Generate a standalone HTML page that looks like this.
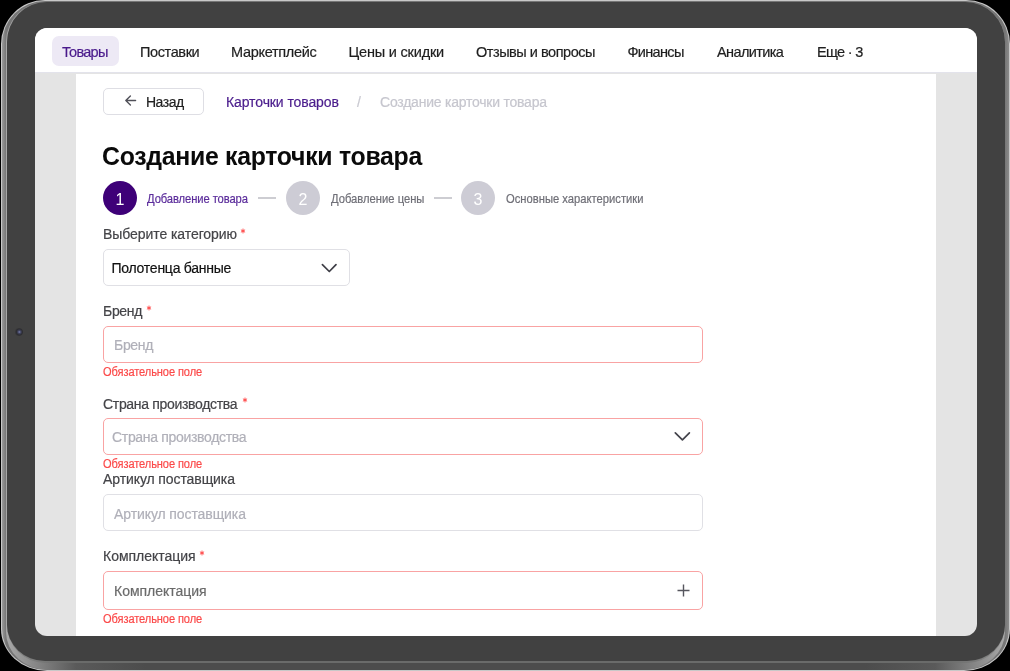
<!DOCTYPE html>
<html><head><meta charset="utf-8">
<style>
*{margin:0;padding:0;box-sizing:border-box}
html,body{width:1010px;height:671px;overflow:hidden;background:#000}
body{position:relative;font-family:"Liberation Sans",sans-serif}
.t,.ni{-webkit-text-stroke:0.2px currentColor}
#title{-webkit-text-stroke:0}
#wrap{position:absolute;left:0;top:0;width:1010px;height:671px;will-change:transform}
.abs{position:absolute}
#tA{left:1px;top:0;width:1009px;height:671px;border-radius:44px 44px 46px 46px/44px 44px 42px 42px;background:#c8c8c8}
#tB{left:2px;top:1px;width:1007px;height:669px;border-radius:43px 43px 45px 45px/43px 43px 41px 41px;background:linear-gradient(90deg,#9a9a9a,#767676 4px,#767676 calc(100% - 4px),#8a8a8a)}
#tC{left:6px;top:2px;width:999px;height:668px;border-radius:40px 40px 42px 42px/40px 40px 38px 38px;background:linear-gradient(90deg,#a8a8a8 0,#8c8c8c 25px,#5a5a5a 70px,#4c4c4c 140px,#4c4c4c calc(100% - 140px),#5a5a5a calc(100% - 70px),#8c8c8c calc(100% - 25px),#a8a8a8 100%)}
#tD{left:7px;top:2px;width:998px;height:661px;border-radius:40px 40px 38px 38px;background:linear-gradient(90deg,#8a8a8a 0,#6a6b6a 60px,#6a6b6a calc(100% - 60px),#8a8a8a 100%)}
#tE{left:7px;top:2px;width:998px;height:658.5px;border-radius:40px 40px 38px 38px/40px 40px 36px 36px;background:#414141}
#cam{left:14.5px;top:328px;width:8px;height:8px;border-radius:50%;background:radial-gradient(circle at 55% 50%,#7a80b0 0,#40435e 1.5px,#2c2c30 3px,#363638 4px)}
#screen{left:35px;top:28px;width:942px;height:608px;border-radius:12px;background:#e4e4e4;overflow:hidden}
#nav{left:0;top:0;width:942px;height:45px;background:#fff;border-bottom:1px solid #e3e3eb}
#content{left:41px;top:46px;width:860px;height:570px;background:#fff}
.ni{position:absolute;top:0;height:45px;line-height:48px;font-size:14.5px;color:#1f1f1f;white-space:nowrap}
#pill{left:17px;top:8px;width:67px;height:30px;border-radius:7px;background:#ede9f5}
.t{position:absolute;white-space:nowrap}
.circ{width:34px;height:34px;border-radius:50%;color:#fff;font-size:16px;line-height:38px;text-align:center}
.lbl{font-size:14px;color:#444448;line-height:16px}
.ast{color:#f04a4a;margin-left:4px;font-size:12px;position:relative;top:-3px}
.box{border:1px solid #e0e0e5;border-radius:5px;background:#fff}
.err{border-color:#f9a3a3}
.ph{font-size:14px;color:#b0b0b9}
.er{font-size:12.3px;letter-spacing:-0.1px;color:#fb4a4a;transform-origin:0 0;transform:scaleX(0.9)}
.t{line-height:16px}
.st{font-size:12.2px;transform-origin:0 0;transform:scaleX(0.92)}
</style></head><body><div id="wrap">
<div id="tA" class="abs"></div>
<div id="tB" class="abs"></div>
<div id="tC" class="abs"></div>
<div id="tD" class="abs"></div>
<div id="tE" class="abs"></div>
<div id="cam" class="abs"></div>
<div id="screen" class="abs">
  <div id="nav" class="abs">
    <div id="pill" class="abs"></div>
    <div class="ni" style="left:27px;color:#4a1a8c;letter-spacing:-0.7px">Товары</div>
    <div class="ni" style="left:105px;letter-spacing:-0.39px">Поставки</div>
    <div class="ni" style="left:196px;letter-spacing:-0.3px">Маркетплейс</div>
    <div class="ni" style="left:313.5px;letter-spacing:-0.19px">Цены и скидки</div>
    <div class="ni" style="left:441px;letter-spacing:-0.47px">Отзывы и вопросы</div>
    <div class="ni" style="left:592.5px;letter-spacing:-0.67px">Финансы</div>
    <div class="ni" style="left:682px;letter-spacing:-0.62px">Аналитика</div>
    <div class="ni" style="left:782px;letter-spacing:-0.7px">Еще · 3</div>
  </div>
  <div id="content" class="abs"></div>
</div>
<!-- page content -->
<div class="abs" style="left:103px;top:88px;width:101px;height:27px;border:1px solid #dedee4;border-radius:5px"></div>
<svg class="abs" style="left:124px;top:95px" width="14" height="12" viewBox="0 0 14 12"><path d="M1.8 5.5H11.6M6.4 1L1.8 5.5L6.4 10" fill="none" stroke="#505058" stroke-width="1.35" stroke-linecap="round" stroke-linejoin="round"/></svg>
<div class="t" id="back" style="left:146px;top:94px;font-size:14px;letter-spacing:-0.5px;color:#1f1f1f">Назад</div>
<div class="t" id="bc1" style="left:226px;top:94px;font-size:14px;letter-spacing:-0.1px;color:#4b1d8d">Карточки товаров</div>
<div class="t" id="bcs" style="left:357px;top:94px;font-size:14px;color:#c9c9d1">/</div>
<div class="t" id="bc2" style="left:380px;top:94px;font-size:14px;letter-spacing:-0.23px;color:#c6c6ce">Создание карточки товара</div>
<div class="t" id="title" style="left:102px;top:147.5px;font-size:26px;font-weight:bold;letter-spacing:-0.3px;color:#0a0a0a;transform-origin:0 0;transform:scaleX(0.955)">Создание карточки товара</div>
<!-- stepper -->
<div class="abs circ" style="left:103px;top:181px;background:#3e0078">1</div>
<div class="t st" id="s1" style="left:147px;top:191px;letter-spacing:-0.1px;color:#5b2c9b">Добавление товара</div>
<div class="abs" style="left:258px;top:197px;width:17.5px;height:1.6px;background:#cdcdd2"></div>
<div class="abs circ" style="left:286px;top:181px;background:#cdccd5">2</div>
<div class="t st" id="s2" style="left:331px;top:191px;letter-spacing:0px;color:#6f6f77">Добавление цены</div>
<div class="abs" style="left:434px;top:197px;width:17.5px;height:1.6px;background:#cdcdd2"></div>
<div class="abs circ" style="left:461px;top:181px;background:#cdccd5">3</div>
<div class="t st" id="s3" style="left:506px;top:191px;letter-spacing:0px;color:#6f6f77">Основные характеристики</div>
<!-- form -->
<div class="t lbl" style="left:103px;top:226px;letter-spacing:-0.07px">Выберите категорию</div>
<div class="abs box" style="left:103px;top:249px;width:247px;height:37px"></div>
<div class="t" style="left:111.5px;top:260px;font-size:14px;letter-spacing:-0.25px;color:#111">Полотенца банные</div>
<svg class="abs" style="left:320px;top:262px" width="19" height="12" viewBox="0 0 19 12"><path d="M2.4 2.7L9.3 9.5L16 2.6" fill="none" stroke="#3e3e46" stroke-width="1.7" stroke-linecap="round" stroke-linejoin="round"/></svg>

<div class="t lbl" style="left:103px;top:303px;letter-spacing:-0.3px">Бренд</div>
<div class="abs box err" style="left:103px;top:326px;width:600px;height:37px"></div>
<div class="t ph" style="left:114px;top:337px;letter-spacing:-0.3px">Бренд</div>
<div class="t er" style="left:103px;top:363.5px">Обязательное поле</div>

<div class="t lbl" style="left:103px;top:396px;letter-spacing:-0.32px">Страна производства</div>
<div class="abs box err" style="left:103px;top:418px;width:600px;height:37px"></div>
<div class="t ph" style="left:112px;top:429px;letter-spacing:-0.32px">Страна производства</div>
<svg class="abs" style="left:673px;top:430px" width="19" height="12" viewBox="0 0 19 12"><path d="M2.3 2.8L9.4 9.9L16.4 2.8" fill="none" stroke="#44444c" stroke-width="1.7" stroke-linecap="round" stroke-linejoin="round"/></svg>
<div class="t er" style="left:103px;top:455.5px">Обязательное поле</div>

<div class="t lbl" style="left:103px;top:471px;letter-spacing:-0.09px">Артикул поставщика</div>
<div class="abs box" style="left:103px;top:494px;width:600px;height:37px"></div>
<div class="t ph" style="left:114px;top:506px;letter-spacing:-0.09px">Артикул поставщика</div>

<div class="t lbl" style="left:103px;top:548px;letter-spacing:-0.03px">Комплектация</div>
<div class="abs box err" style="left:103px;top:571px;width:600px;height:39px"></div>
<div class="t ph" style="left:114px;top:583px;letter-spacing:-0.03px;color:#6b6b6b">Комплектация</div>
<svg class="abs" style="left:676px;top:583px" width="15" height="15" viewBox="0 0 15 15"><path d="M7.5 1.5V13.5M1.5 7.5H13.5" fill="none" stroke="#56565e" stroke-width="1.4"/></svg>
<div class="t er" style="left:103px;top:610.5px">Обязательное поле</div>
<svg class="abs" style="left:239.4px;top:227.0px" width="8" height="8" viewBox="0 0 8 8"><path d="M4.00 1.60L4.00 6.40M1.92 2.80L6.08 5.20M6.08 2.80L1.92 5.20" stroke="#ff4040" stroke-width="0.9" fill="none"/></svg>
<svg class="abs" style="left:144.8px;top:303.8px" width="8" height="8" viewBox="0 0 8 8"><path d="M4.00 1.60L4.00 6.40M1.92 2.80L6.08 5.20M6.08 2.80L1.92 5.20" stroke="#ff4040" stroke-width="0.9" fill="none"/></svg>
<svg class="abs" style="left:240.6px;top:395.9px" width="8" height="8" viewBox="0 0 8 8"><path d="M4.00 1.60L4.00 6.40M1.92 2.80L6.08 5.20M6.08 2.80L1.92 5.20" stroke="#ff4040" stroke-width="0.9" fill="none"/></svg>
<svg class="abs" style="left:198.2px;top:548.8px" width="8" height="8" viewBox="0 0 8 8"><path d="M4.00 1.60L4.00 6.40M1.92 2.80L6.08 5.20M6.08 2.80L1.92 5.20" stroke="#ff4040" stroke-width="0.9" fill="none"/></svg>
</div></body></html>
